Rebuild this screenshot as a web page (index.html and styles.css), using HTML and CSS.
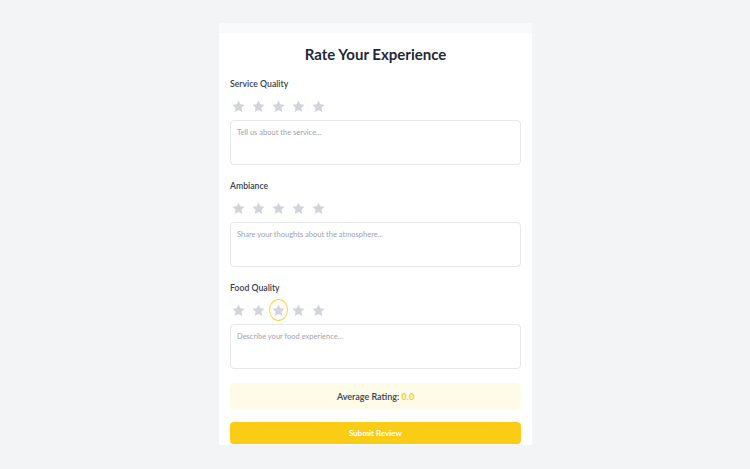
FILE: index.html
```html
<!DOCTYPE html>
<html lang="en">
<head>
<meta charset="utf-8">
<title>Rate Your Experience</title>
<link rel="stylesheet" href="styles.css">
</head>
<body>
<main class="page">
  <form class="card">
    <h1 class="title">Rate Your Experience</h1>

    <section class="section">
      <label class="label">Service Quality</label>
      <div class="stars">
        <button type="button" class="star"><svg viewBox="0 0 24 24"><path d="M12 2.2l2.9 6.3 6.9.8-5.1 4.7 1.4 6.8L12 17.4l-6.1 3.4 1.4-6.8-5.1-4.7 6.9-.8z"/></svg></button>
        <button type="button" class="star"><svg viewBox="0 0 24 24"><path d="M12 2.2l2.9 6.3 6.9.8-5.1 4.7 1.4 6.8L12 17.4l-6.1 3.4 1.4-6.8-5.1-4.7 6.9-.8z"/></svg></button>
        <button type="button" class="star"><svg viewBox="0 0 24 24"><path d="M12 2.2l2.9 6.3 6.9.8-5.1 4.7 1.4 6.8L12 17.4l-6.1 3.4 1.4-6.8-5.1-4.7 6.9-.8z"/></svg></button>
        <button type="button" class="star"><svg viewBox="0 0 24 24"><path d="M12 2.2l2.9 6.3 6.9.8-5.1 4.7 1.4 6.8L12 17.4l-6.1 3.4 1.4-6.8-5.1-4.7 6.9-.8z"/></svg></button>
        <button type="button" class="star"><svg viewBox="0 0 24 24"><path d="M12 2.2l2.9 6.3 6.9.8-5.1 4.7 1.4 6.8L12 17.4l-6.1 3.4 1.4-6.8-5.1-4.7 6.9-.8z"/></svg></button>
      </div>
      <textarea class="field" placeholder="Tell us about the service..."></textarea>
    </section>

    <section class="section">
      <label class="label">Ambiance</label>
      <div class="stars">
        <button type="button" class="star"><svg viewBox="0 0 24 24"><path d="M12 2.2l2.9 6.3 6.9.8-5.1 4.7 1.4 6.8L12 17.4l-6.1 3.4 1.4-6.8-5.1-4.7 6.9-.8z"/></svg></button>
        <button type="button" class="star"><svg viewBox="0 0 24 24"><path d="M12 2.2l2.9 6.3 6.9.8-5.1 4.7 1.4 6.8L12 17.4l-6.1 3.4 1.4-6.8-5.1-4.7 6.9-.8z"/></svg></button>
        <button type="button" class="star"><svg viewBox="0 0 24 24"><path d="M12 2.2l2.9 6.3 6.9.8-5.1 4.7 1.4 6.8L12 17.4l-6.1 3.4 1.4-6.8-5.1-4.7 6.9-.8z"/></svg></button>
        <button type="button" class="star"><svg viewBox="0 0 24 24"><path d="M12 2.2l2.9 6.3 6.9.8-5.1 4.7 1.4 6.8L12 17.4l-6.1 3.4 1.4-6.8-5.1-4.7 6.9-.8z"/></svg></button>
        <button type="button" class="star"><svg viewBox="0 0 24 24"><path d="M12 2.2l2.9 6.3 6.9.8-5.1 4.7 1.4 6.8L12 17.4l-6.1 3.4 1.4-6.8-5.1-4.7 6.9-.8z"/></svg></button>
      </div>
      <textarea class="field" placeholder="Share your thoughts about the atmosphere..."></textarea>
    </section>

    <section class="section">
      <label class="label">Food Quality</label>
      <div class="stars">
        <button type="button" class="star"><svg viewBox="0 0 24 24"><path d="M12 2.2l2.9 6.3 6.9.8-5.1 4.7 1.4 6.8L12 17.4l-6.1 3.4 1.4-6.8-5.1-4.7 6.9-.8z"/></svg></button>
        <button type="button" class="star"><svg viewBox="0 0 24 24"><path d="M12 2.2l2.9 6.3 6.9.8-5.1 4.7 1.4 6.8L12 17.4l-6.1 3.4 1.4-6.8-5.1-4.7 6.9-.8z"/></svg></button>
        <button type="button" class="star star-focus"><svg viewBox="0 0 24 24"><path d="M12 2.2l2.9 6.3 6.9.8-5.1 4.7 1.4 6.8L12 17.4l-6.1 3.4 1.4-6.8-5.1-4.7 6.9-.8z"/></svg></button>
        <button type="button" class="star"><svg viewBox="0 0 24 24"><path d="M12 2.2l2.9 6.3 6.9.8-5.1 4.7 1.4 6.8L12 17.4l-6.1 3.4 1.4-6.8-5.1-4.7 6.9-.8z"/></svg></button>
        <button type="button" class="star"><svg viewBox="0 0 24 24"><path d="M12 2.2l2.9 6.3 6.9.8-5.1 4.7 1.4 6.8L12 17.4l-6.1 3.4 1.4-6.8-5.1-4.7 6.9-.8z"/></svg></button>
      </div>
      <textarea class="field" placeholder="Describe your food experience..."></textarea>
    </section>

    <div class="average">Average Rating: <span class="average-value">0.0</span></div>
    <button type="button" class="submit">Submit Review</button>
  </form>
</main>
</body>
</html>
```

FILE: styles.css
```css
* { box-sizing: border-box; }

html, body {
  margin: 0;
  padding: 0;
  background: #f3f4f6;
  font-family: Lato, "Noto Sans", "Liberation Sans", sans-serif;
}

.page {
  display: flex;
  justify-content: center;
  padding-top: 23px;
  height: 469px;
}

.card {
  width: 313px;
  margin-left: 1px;
  align-self: flex-start;
  background: #ffffff;
  border-top: 10px solid #f9fafb;
  padding: 11px 11px 1px 11px;
  display: flex;
  flex-direction: column;
}

.title {
  margin: 0 0 13px 0;
  font-size: 15px;
  line-height: 20px;
  font-weight: 700;
  color: #1f2937;
  text-align: center;
}

.section {
  display: flex;
  flex-direction: column;
  margin-bottom: 14px;
}

.label {
  font-size: 8.7px;
  line-height: 14px;
  font-weight: 600;
  color: #374151;
}

.stars {
  display: flex;
  gap: 3px;
  margin-top: 5px;
  margin-left: -0.5px;
}

.star {
  width: 17px;
  height: 20px;
  padding: 0;
  border: 0;
  background: none;
  border-radius: 50%;
  display: flex;
  align-items: center;
  justify-content: center;
  cursor: pointer;
}

.star svg {
  width: 15px;
  height: 15px;
  fill: #d1d5db;
  display: block;
}

.star-focus {
  box-shadow: 0 0 0 1px #fcd34d;
}

.field {
  margin-top: 4px;
  height: 45px;
  width: 100%;
  resize: none;
  border: 1px solid #e5e7eb;
  border-radius: 4px;
  padding: 6px;
  font-family: Lato, "Noto Sans", "Liberation Sans", sans-serif;
  font-size: 7.5px;
  line-height: 11px;
  color: #374151;
  background: #fff;
}

.field::placeholder {
  color: #9ca3af;
}

.average {
  margin-top: 0;
  height: 27px;
  background: #fefce8;
  border-radius: 5px;
  display: flex;
  align-items: center;
  justify-content: center;
  font-size: 9px;
  font-weight: 600;
  color: #374151;
  white-space: pre;
}

.average-value {
  color: #facc15;
  font-weight: 700;
}

.submit {
  margin-top: 12px;
  height: 22px;
  width: 100%;
  border: 0;
  border-radius: 4px;
  background: #facc15;
  color: #ffffff;
  font-family: Lato, "Noto Sans", "Liberation Sans", sans-serif;
  font-size: 8px;
  font-weight: 700;
  cursor: pointer;
}
```
